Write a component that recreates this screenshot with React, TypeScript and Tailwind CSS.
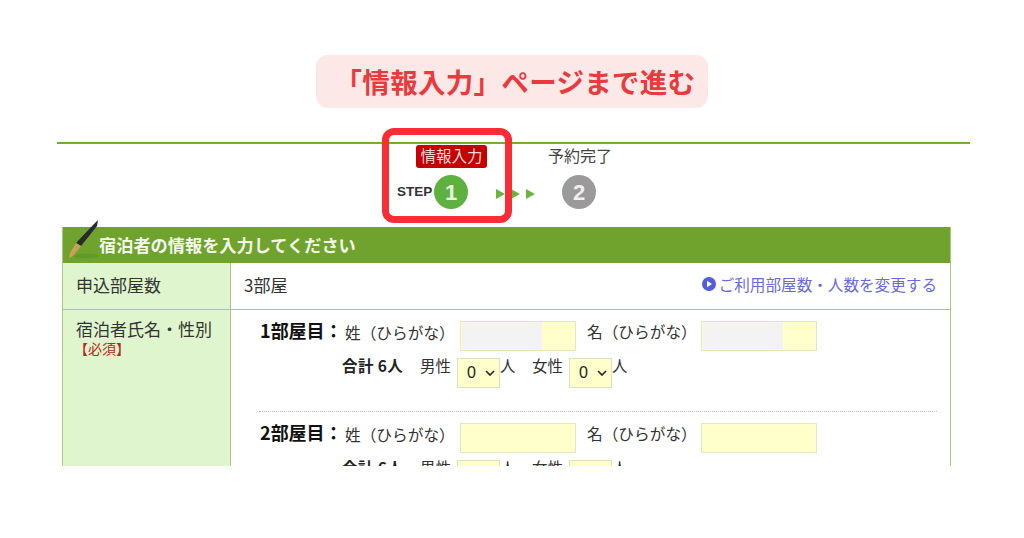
const FONT = "font-['Noto_Sans_CJK_JP','Noto_Sans',sans-serif]"
const LATIN = "font-['Liberation_Sans',sans-serif]"

function Pen() {
  return (
    <svg width="36" height="42" viewBox="0 0 36 42" className="absolute left-[66px] top-[219px]">
      <ellipse cx="20" cy="37" rx="13" ry="2.5" fill="#5f9a2a" />
      <path d="M28 5 L32 1 L31 7 L15 27 L10 24 Z" fill="#2b2a26" />
      <path d="M10 24 L15 27 L7 37 L3 39 L4 34 Z" fill="#c9a05a" />
    </svg>
  )
}

function Arrow() {
  return <span className="h-0 w-0 border-y-[5px] border-l-[9px] border-y-transparent border-l-[#6db33f]" />
}

function NameField({ filled }: { filled: boolean }) {
  return (
    <div className="flex h-[30px] w-[116px] border border-[#e6e6c0] bg-[#ffffcc]">
      {filled && <div className="ml-[1px] h-full w-[80px] bg-[#f3f3f3]" />}
    </div>
  )
}

function Count() {
  return (
    <div className={`flex h-[30px] w-[43px] items-center justify-between border border-[#e0e0c0] bg-[#ffffcc] pl-[9px] pr-[4px] text-[16px] text-[#222] ${LATIN}`}>
      0
      <svg width="10" height="6" viewBox="0 0 10 6" fill="none" stroke="#222" strokeWidth="1.6">
        <path d="M1 1 L5 5 L9 1" />
      </svg>
    </div>
  )
}

function RoomBlock({ no, filled, first }: { no: number; filled: boolean; first?: boolean }) {
  return (
    <div className={first ? "" : "mt-[11px]"}>
      <div className="flex items-start">
        <span className="-mt-[2px] w-[86px] pl-[1px] text-[18px] leading-[22px] font-bold whitespace-nowrap text-[#111]">{no}部屋目：</span>
        <span className="mt-[1px] w-[115px] text-[15.7px] leading-[22px] whitespace-nowrap text-[#333]">姓（ひらがな）</span>
        <NameField filled={filled} />
        <span className="ml-[11px] w-[114px] text-[15.7px] leading-[22px] whitespace-nowrap text-[#333]">名（ひらがな）</span>
        <NameField filled={filled} />
      </div>
      <div className="mt-[4px] ml-[83px] flex items-start text-[15.5px] leading-[20px] text-[#333]">
        <span className="w-[78px] font-bold tracking-[0.4px] whitespace-nowrap text-[#222]">合計 6人</span>
        <span className="w-[37px] whitespace-nowrap">男性</span>
        <div className="mt-[3px]"><Count /></div>
        <span className="w-[32px]">人</span>
        <span className="w-[37px] whitespace-nowrap">女性</span>
        <div className="mt-[3px]"><Count /></div>
        <span>人</span>
      </div>
    </div>
  )
}

export default function App() {
  return (
    <div className={`relative flex h-[538px] w-[1024px] flex-col overflow-hidden bg-white ${FONT}`}>
      <div className="mx-auto mt-[55px] flex h-[53px] w-[392px] items-center justify-center rounded-[12px] bg-[#fde8e8] pl-[6px] text-[27.5px] font-bold tracking-[0.3px] whitespace-nowrap text-[#ea3a3d]">
        「情報入力」ページまで進む
      </div>

      <div className="mt-[34px] mr-[54px] ml-[57px] h-[2px] bg-[#6fb02f]" />

      <div className="flex h-[83px] pl-[397px]">
        <div className="w-[165px]">
          <div className="mt-[1px] ml-[19px] flex h-[23px] w-[71px] items-center justify-center rounded-[3px] bg-[#c40000] pb-[2px] text-[15.5px] whitespace-nowrap text-[#f5dcdc]">
            情報入力
          </div>
          <div className="mt-[7px] flex items-center">
            <span className={`w-[37px] text-[13.5px] font-bold text-[#333] ${LATIN}`}>STEP</span>
            <span className={`flex h-[34px] w-[34px] items-center justify-center rounded-full bg-[#5fb13f] text-[22px] font-bold text-[#e9f5e3] ${LATIN}`}>1</span>
            <div className="ml-[28px] flex gap-[6px] pt-[3px]">
              <Arrow />
              <Arrow />
              <Arrow />
            </div>
          </div>
        </div>
        <div className="w-[100px]">
          <div className="mt-[1px] -ml-[15px] flex h-[23px] w-[66px] items-center justify-center pb-[3px] text-[16px] whitespace-nowrap text-[#444]">
            予約完了
          </div>
          <span className={`mt-[7px] flex h-[34px] w-[34px] items-center justify-center rounded-full bg-[#9a9a9a] text-[22px] font-bold text-[#f0f0f0] ${LATIN}`}>2</span>
        </div>
      </div>

      <div className="ml-[62px] h-[239px] w-[889px] overflow-hidden border-x border-[#a5cc7b]">
        <div className="flex h-[36px] items-center bg-[#6fa32d] pl-[36px] text-[17.2px] font-bold whitespace-nowrap text-[#f3f8ea]">
          宿泊者の情報を入力してください
        </div>
        <div className="flex h-[47px] border-b border-[#a5cc7b]">
          <div className="flex w-[168px] items-center border-r border-[#a5cc7b] bg-[#dff5cd] pb-[3px] pl-[13px] text-[17px] text-[#333]">
            申込部屋数
          </div>
          <div className="flex flex-1 items-center justify-between pr-[13px] pb-[3px] pl-[13px] text-[17px] text-[#333]">
            <span>3部屋</span>
            <span className="flex items-center gap-[3px] text-[15.6px] text-[#6a6ae0]">
              <svg width="14" height="14" viewBox="0 0 14 14">
                <circle cx="7" cy="7" r="7" fill="#4f5fdc" />
                <path d="M5 3.8 L10 7 L5 10.2 Z" fill="#fff" />
              </svg>
              ご利用部屋数・人数を変更する
            </span>
          </div>
        </div>
        <div className="flex h-[156px]">
          <div className="w-[168px] border-r border-[#a5cc7b] bg-[#dff5cd] pt-[9px] pl-[13px] text-[17px] leading-[20px] whitespace-nowrap text-[#333]">
            宿泊者氏名・性別
            <div className="mt-[1px] -ml-[2px] text-[14px] leading-[16px] text-[#c22222]">【必須】</div>
          </div>
          <div className="flex-1 pt-[11px] pr-[13px] pl-[28px]">
            <RoomBlock no={1} filled first />
            <div className="mt-[23px] border-t border-dotted border-[#bbb]" />
            <RoomBlock no={2} filled={false} />
          </div>
        </div>
      </div>

      <Pen />
      <div className="absolute top-[128px] left-[382px] h-[95px] w-[130px] rounded-[12px] border-[7px] border-[#fb2c36]" />
    </div>
  )
}
